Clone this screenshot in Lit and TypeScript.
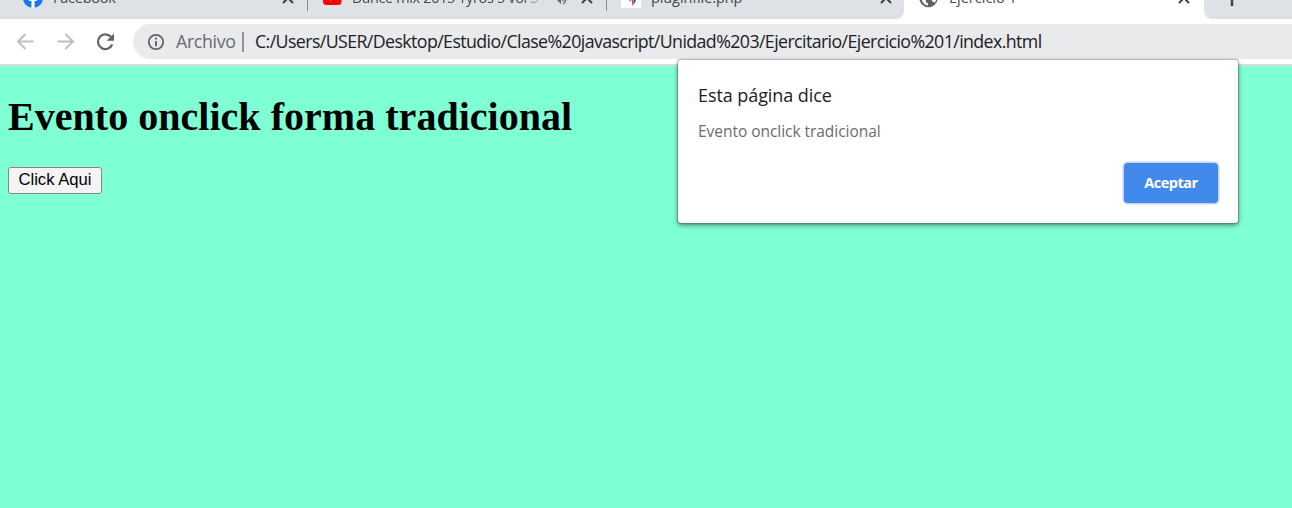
import { LitElement, html, css, svg } from "lit";
import { customElement } from "lit/decorators.js";

const facebook = svg`<circle cx="10" cy="10" r="10" fill="#1877f2"/><path d="M8.4 20v-7H5.9V10h2.5V7.8c0-2.6 1.5-4 3.8-4 1.100 0 2.200.2 2.200.2v2.500h-1.200c-1.200 0-1.600.8-1.600 1.500v2h2.700l-.45 3H11.600v7z" fill="#fff"/>`;
const youtube = svg`<rect x="1" y="3" width="18.500" height="14" rx="3.500" fill="#f00"/><path d="M8 7.200v5.600l4.800-2.800z" fill="#fff"/>`;
const plugin = svg`<rect width="20" height="20" fill="#fff"/><path d="M6 9l3.500 5v-4L7 7z" fill="#1d4f91"/><path d="M9 8l3.500 4.500v2.500l-1.500 3 .2-4z" fill="#e0322f"/><path d="M12.800 7.500h1.800v6l-2.600 4 .8-4z" fill="#24549a"/>`;
const globe = svg`<circle cx="9.500" cy="10" r="9.200" fill="#5f6368"/><path d="M2.500 8.500l4.500 4.200v1.500l2 1.300v2C5.500 17 2.500 14 2.500 10zM10 3h4v3.500l-2 2H9V11h4v2.500h1.500l1 1.500c1.500-1.700 2-3.500 1.500-6l-2-3.500z" fill="#fff"/>`;

@customElement("app-root")
export class AppRoot extends LitElement {
  static styles = css`
    :host { display: block; width: 1292px; height: 508px; overflow: hidden; position: relative; background: #7fffd4; font-family: "Open Sans", sans-serif; }
    svg { display: block; flex: none; overflow: visible; }
    .strip { display: flex; align-items: flex-end; height: 19px; overflow: hidden; background: #fff; }
    .inactive { display: flex; flex: none; width: 904px; height: 42px; box-sizing: border-box; padding-left: 8px; background: #dee1e6; border-bottom-right-radius: 8px; }
    .tab { position: relative; display: flex; align-items: center; flex: none; box-sizing: border-box; width: 299px; height: 42px; padding: 0 13px 0 15px; color: #45494d; font-size: 14.5px; }
    .active { width: 300px; padding-left: 15px; padding-right: 14px; }
    .fav { width: 20px; height: 20px; }
    .title { margin-left: 10px; flex: none; white-space: nowrap; line-height: 20px; }
    .t1 { letter-spacing: -0.25px; }
    .t2 { letter-spacing: -0.35px; width: 193px; overflow: hidden; -webkit-mask-image: linear-gradient(90deg, #000 88%, transparent 100%); }
    .t3 { letter-spacing: -0.1px; }
    .end { margin-left: auto; display: flex; align-items: center; gap: 14px; }
    .sep { position: absolute; right: -1px; top: 12px; width: 1.500px; height: 22px; background: #898c91; }
    .more { flex: 1; height: 42px; background: #dee1e6; border-bottom-left-radius: 8px; display: flex; align-items: center; padding-left: 19px; }
    .bar { display: flex; align-items: center; box-sizing: border-box; height: 45px; padding: 0 0 0 15px; background: #fff; }
    .nav { display: flex; gap: 20px; width: 118px; }
    .url { flex: 1; display: flex; align-items: center; box-sizing: border-box; height: 35px; padding-left: 14px; border-radius: 18px 0 0 18px; background: #e9eaec; font-size: 17.8px; line-height: 24px; white-space: nowrap; color: #202124; }
    .scheme { margin: -1px 0 0 11px; width: 66px; color: #696c70; letter-spacing: -0.35px; }
    .divider { width: 2px; height: 20px; background: #919396; margin-right: 11px; }
    .path { margin-top: -1px; letter-spacing: -0.6px; }
    .line { height: 2px; background: #dadce0; }
    .content { padding: 28px 8px 0 8px; }
    h1 { margin: 0; font: bold 40px/46px "Liberation Serif", serif; letter-spacing: 0.03px; white-space: nowrap; color: #000; }
    .click { display: block; box-sizing: border-box; margin-top: 27px; width: 94px; height: 27px; padding: 0 0 2px; border: 1px solid #858585; border-radius: 3px; background: #f4f4f4; color: #000; font: 16.67px/23px "Liberation Sans", sans-serif; white-space: nowrap; }
    .dialog { position: absolute; left: 678px; top: 60px; width: 560px; height: 163px; box-sizing: border-box; padding: 21px 20px 20px; display: flex; flex-direction: column; background: #fff; border-radius: 3px; box-shadow: 0 0 1px 0.500px rgba(60,64,67,.3), 0 2px 5px rgba(0,0,0,.5); }
    .says { font-size: 18px; line-height: 28px; color: #202124; letter-spacing: -0.08px; }
    .message { margin-top: 9px; font-size: 15.5px; line-height: 26px; color: #696c70; letter-spacing: -0.04px; }
    .accept { margin: auto 0 0 auto; width: 94px; height: 40px; border: 0; border-radius: 4px; background: #4189eb; box-shadow: 0 0 0 1.500px #bdd5f8; color: #fff; font: bold 14.5px/38px "Open Sans", sans-serif; padding: 0 0 1px; letter-spacing: -0.5px; }
  `;

  private close() {
    return html`<svg width="12" height="12" viewBox="0 0 12 12"><path d="M1 1l10 10M11 1L1 11" stroke="#3c4043" stroke-width="2"/></svg>`;
  }

  private favicon(shape: unknown) {
    return html`<svg class="fav" viewBox="0 0 20 20">${shape}</svg>`;
  }

  render() {
    return html`
      <div class="strip">
        <div class="inactive">
          <div class="tab">${this.favicon(facebook)}<span class="title t1">Facebook</span><span class="end">${this.close()}</span><i class="sep"></i></div>
          <div class="tab">${this.favicon(youtube)}<span class="title t2">Dance mix 2015 Tyros 5 vol 5 mix</span>
            <span class="end">
              <svg width="13" height="14" viewBox="0 0 13 14"><path d="M0 5h3l4-4v12L3 9H0z" fill="#5f6368"/><path d="M8.500 4q2.500 3 0 6M9.500 1q5 6 0 12" fill="none" stroke="#5f6368" stroke-width="1.300"/></svg>
              ${this.close()}
            </span><i class="sep"></i></div>
          <div class="tab">${this.favicon(plugin)}<span class="title t3">pluginfile.php</span><span class="end">${this.close()}</span></div>
        </div>
        <div class="tab active">${this.favicon(globe)}<span class="title t4">Ejercicio 1</span><span class="end">${this.close()}</span></div>
        <div class="more"><svg width="18" height="16" viewBox="0 0 18 16"><path d="M9 0v16M1 8h16" stroke="#3c4043" stroke-width="2.400"/></svg></div>
      </div>
      <div class="bar">
        <div class="nav">
          <svg width="20" height="20" viewBox="0 0 20 20"><path d="M18.500 9.500H3M10.500 2L3 9.500l7.500 7.500" fill="none" stroke="#bdbfc1" stroke-width="2"/></svg>
          <svg width="20" height="20" viewBox="0 0 20 20"><path d="M2.500 9.500H18M10.500 2L18 9.500 10.500 17" fill="none" stroke="#bdbfc1" stroke-width="2"/></svg>
          <svg width="20" height="20" viewBox="0 0 20 20"><path d="M15.900 4.800A7.400 7.400 0 1 0 17.200 12.500" fill="none" stroke="#5f6368" stroke-width="2.200"/><path d="M19 1.500v7.300h-7.300z" fill="#5f6368"/></svg>
        </div>
        <div class="url">
          <svg width="18" height="18" viewBox="0 0 18 18"><circle cx="9" cy="9" r="7.200" fill="none" stroke="#5f6368" stroke-width="1.800"/><path d="M9 4.500v2M9 8v5.300" stroke="#5f6368" stroke-width="1.900"/></svg>
          <span class="scheme">Archivo</span><span class="divider"></span>
          <span class="path">C:/Users/USER/Desktop/Estudio/Clase%20javascript/Unidad%203/Ejercitario/Ejercicio%201/index.html</span>
        </div>
      </div>
      <div class="line"></div>
      <main class="content">
        <h1>Evento onclick forma tradicional</h1>
        <button class="click">Click Aqui</button>
      </main>
      <section class="dialog" role="alertdialog">
        <div class="says">Esta página dice</div>
        <div class="message">Evento onclick tradicional</div>
        <button class="accept">Aceptar</button>
      </section>
    `;
  }
}
